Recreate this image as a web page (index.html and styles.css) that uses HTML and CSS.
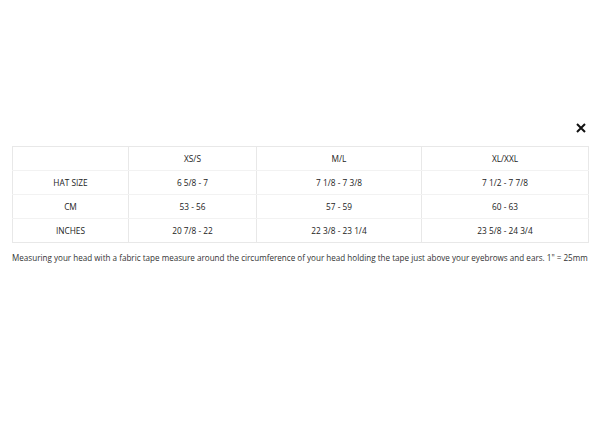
FILE: index.html
```html
<!DOCTYPE html>
<html>
<head>
<meta charset="utf-8">
<link rel="stylesheet" href="styles.css">
</head>
<body>
<div class="modal">
  <div class="close-row"><span class="close">
    <svg width="10" height="10" viewBox="0 0 10 10"><path d="M1 1L9 9M9 1L1 9" stroke="#111" stroke-width="2"/></svg>
  </span></div>
  <table class="size-table">
    <colgroup><col class="c1"><col class="c2"><col class="c3"><col class="c4"></colgroup>
    <tr><td></td><td>XS/S</td><td>M/L</td><td>XL/XXL</td></tr>
    <tr><td>HAT SIZE</td><td>6 5/8 - 7</td><td>7 1/8 - 7 3/8</td><td>7 1/2 - 7 7/8</td></tr>
    <tr><td>CM</td><td>53 - 56</td><td>57 - 59</td><td>60 - 63</td></tr>
    <tr><td>INCHES</td><td>20 7/8 - 22</td><td>22 3/8 - 23 1/4</td><td>23 5/8 - 24 3/4</td></tr>
  </table>
  <p class="note">Measuring your head with a fabric tape measure around the circumference of your head holding the tape just above your eyebrows and ears. 1" = 25mm</p>
</div>
</body>
</html>
```
FILE: styles.css
```css
html, body { margin: 0; padding: 0; background: #fff; }
body { font-family: "Open Sans", "Liberation Sans", sans-serif; color: #222; }
.modal { padding: 123px 12px 0 12px; }
.close-row { display: flex; justify-content: flex-end; padding-right: 2px; height: 23px; }
.close { display: block; width: 10px; height: 10px; }
.close svg { display: block; }
.size-table { width: 576px; border-collapse: collapse; table-layout: fixed; font-size: 8.3px; }
.c1 { width: 116px; } .c2 { width: 128px; } .c3 { width: 165px; } .c4 { width: 167px; }
.size-table td { border: 1px solid #e8e8e8; height: 23px; padding: 0; text-align: center; vertical-align: middle; }
.size-table tr td { border-top-color: #f2f2f2; border-bottom-color: #f2f2f2; }
.size-table tr:first-child td { border-top-color: #e8e8e8; }
.size-table tr:last-child td { border-bottom-color: #e8e8e8; }
.note { margin: 9px 0 0 0; font-size: 8.1px; color: #333; white-space: nowrap; }
```
